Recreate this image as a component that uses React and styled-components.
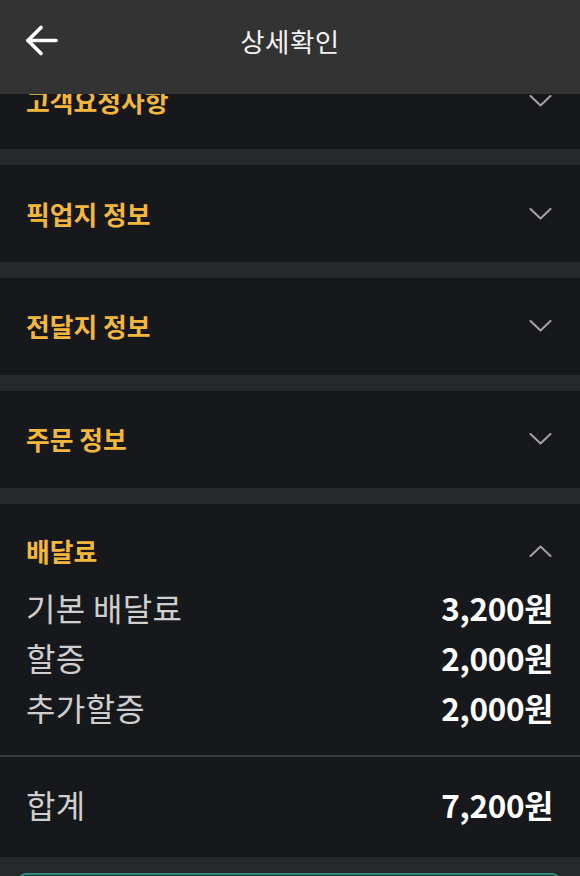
import React from "react";
import styled, { createGlobalStyle } from "styled-components";

const GlobalStyle = createGlobalStyle`
  html, body { margin: 0; padding: 0; background: #27282b; }
  body { font-family: "Noto Sans CJK KR", "Noto Sans", sans-serif; }
  * { box-sizing: border-box; }
`;

const Page = styled.div`
  width: 580px;
  height: 876px;
  display: flex;
  flex-direction: column;
  background: #27282b;
  overflow: hidden;
`;

const TopBar = styled.header`
  position: relative;
  z-index: 2;
  flex: 0 0 94px;
  height: 94px;
  background: #333333;
  display: grid;
  grid-template-columns: 1fr auto 1fr;
  align-items: center;
  padding: 0 25px;
`;

const BackButton = styled.button`
  justify-self: start;
  background: none;
  border: 0;
  padding: 0;
  display: flex;
  align-items: center;
  margin-top: -14px;
  cursor: pointer;
`;

const Title = styled.h1`
  margin: -14px 0 0;
  font-size: 26.5px;
  font-weight: 400;
  color: #f2f2f2;
  letter-spacing: 0.5px;
`;

const Viewport = styled.main`
  flex: 1;
  overflow: hidden;
`;

const List = styled.div`
  display: flex;
  flex-direction: column;
  gap: 16px;
  margin-top: -41.5px;
`;

const Section = styled.section`
  background: #17181b;
  padding: 0 27px 0 26px;
  ${(p) => (p.$open ? "padding-bottom: 28px;" : "height: 96.8px;")}
  display: flex;
  flex-direction: column;
  justify-content: ${(p) => (p.$open ? "flex-start" : "center")};
`;

const SectionHead = styled.div`
  display: flex;
  align-items: center;
  justify-content: space-between;
  height: 28px;
  ${(p) => (p.$open ? "margin-top: 33px;" : "")}
`;

const SectionTitle = styled.h2`
  margin: 0;
  font-size: 25.8px;
  font-weight: 700;
  color: #f4b73e;
  line-height: 28px;
`;

const Chevron = styled.svg`
  width: 23px;
  height: 12px;
  margin-right: 1px;
  display: block;
`;

const Rows = styled.div`
  margin-top: 17px;
  display: flex;
  flex-direction: column;
`;

const Row = styled.div`
  display: flex;
  align-items: center;
  justify-content: space-between;
  height: 50px;
`;

const Label = styled.span`
  font-size: 32px;
  font-weight: 400;
  color: #cfcfcf;
  letter-spacing: 0.3px;
  line-height: 50px;
`;

const Value = styled.span`
  font-family: "Noto Sans CJK KR", sans-serif;
  font-size: 31.5px;
  font-weight: 700;
  color: #ffffff;
  letter-spacing: -0.3px;
  line-height: 50px;
`;

const Divider = styled.hr`
  border: 0;
  height: 2px;
  background: #3b3c3f;
  margin: 23px -27px 22px -26px;
`;

const BottomButton = styled.button`
  margin: 0 20px 0 18px;
  height: 60px;
  flex: 0 0 60px;
  border: 2px solid #2f8a80;
  border-radius: 8px;
  background: #1b2f2d;
`;

function ChevronIcon({ up }) {
  return (
    <Chevron viewBox="0 0 23 12" fill="none">
      <polyline
        points={up ? "1.5,11 11.5,1.5 21.5,11" : "1.5,1 11.5,10.5 21.5,1"}
        stroke="#a3a3a3"
        strokeWidth="2"
        strokeLinecap="round"
        strokeLinejoin="round"
      />
    </Chevron>
  );
}

function CollapsedSection({ title }) {
  return (
    <Section>
      <SectionHead>
        <SectionTitle>{title}</SectionTitle>
        <ChevronIcon />
      </SectionHead>
    </Section>
  );
}

const fees = [
  { label: "기본 배달료", value: "3,200원" },
  { label: "할증", value: "2,000원" },
  { label: "추가할증", value: "2,000원" },
];

export default function App() {
  return (
    <>
      <GlobalStyle />
      <Page>
        <TopBar>
          <BackButton aria-label="뒤로">
            <svg width="33" height="31" viewBox="0 0 33 31" fill="none">
              <line x1="3" y1="15.5" x2="31" y2="15.5" stroke="#fff" strokeWidth="3.6" strokeLinecap="round" />
              <polyline points="16,2.5 3,15.5 16,28.5" stroke="#fff" strokeWidth="3.6" strokeLinecap="round" strokeLinejoin="round" />
            </svg>
          </BackButton>
          <Title>상세확인</Title>
          <span />
        </TopBar>
        <Viewport>
          <List>
            <CollapsedSection title="고객요청사항" />
            <CollapsedSection title="픽업지 정보" />
            <CollapsedSection title="전달지 정보" />
            <CollapsedSection title="주문 정보" />
            <Section $open>
              <SectionHead $open>
                <SectionTitle>배달료</SectionTitle>
                <ChevronIcon up />
              </SectionHead>
              <Rows>
                {fees.map((f) => (
                  <Row key={f.label}>
                    <Label>{f.label}</Label>
                    <Value>{f.value}</Value>
                  </Row>
                ))}
              </Rows>
              <Divider />
              <Row>
                <Label>합계</Label>
                <Value>7,200원</Value>
              </Row>
            </Section>
            <BottomButton aria-label="확인" />
          </List>
        </Viewport>
      </Page>
    </>
  );
}
